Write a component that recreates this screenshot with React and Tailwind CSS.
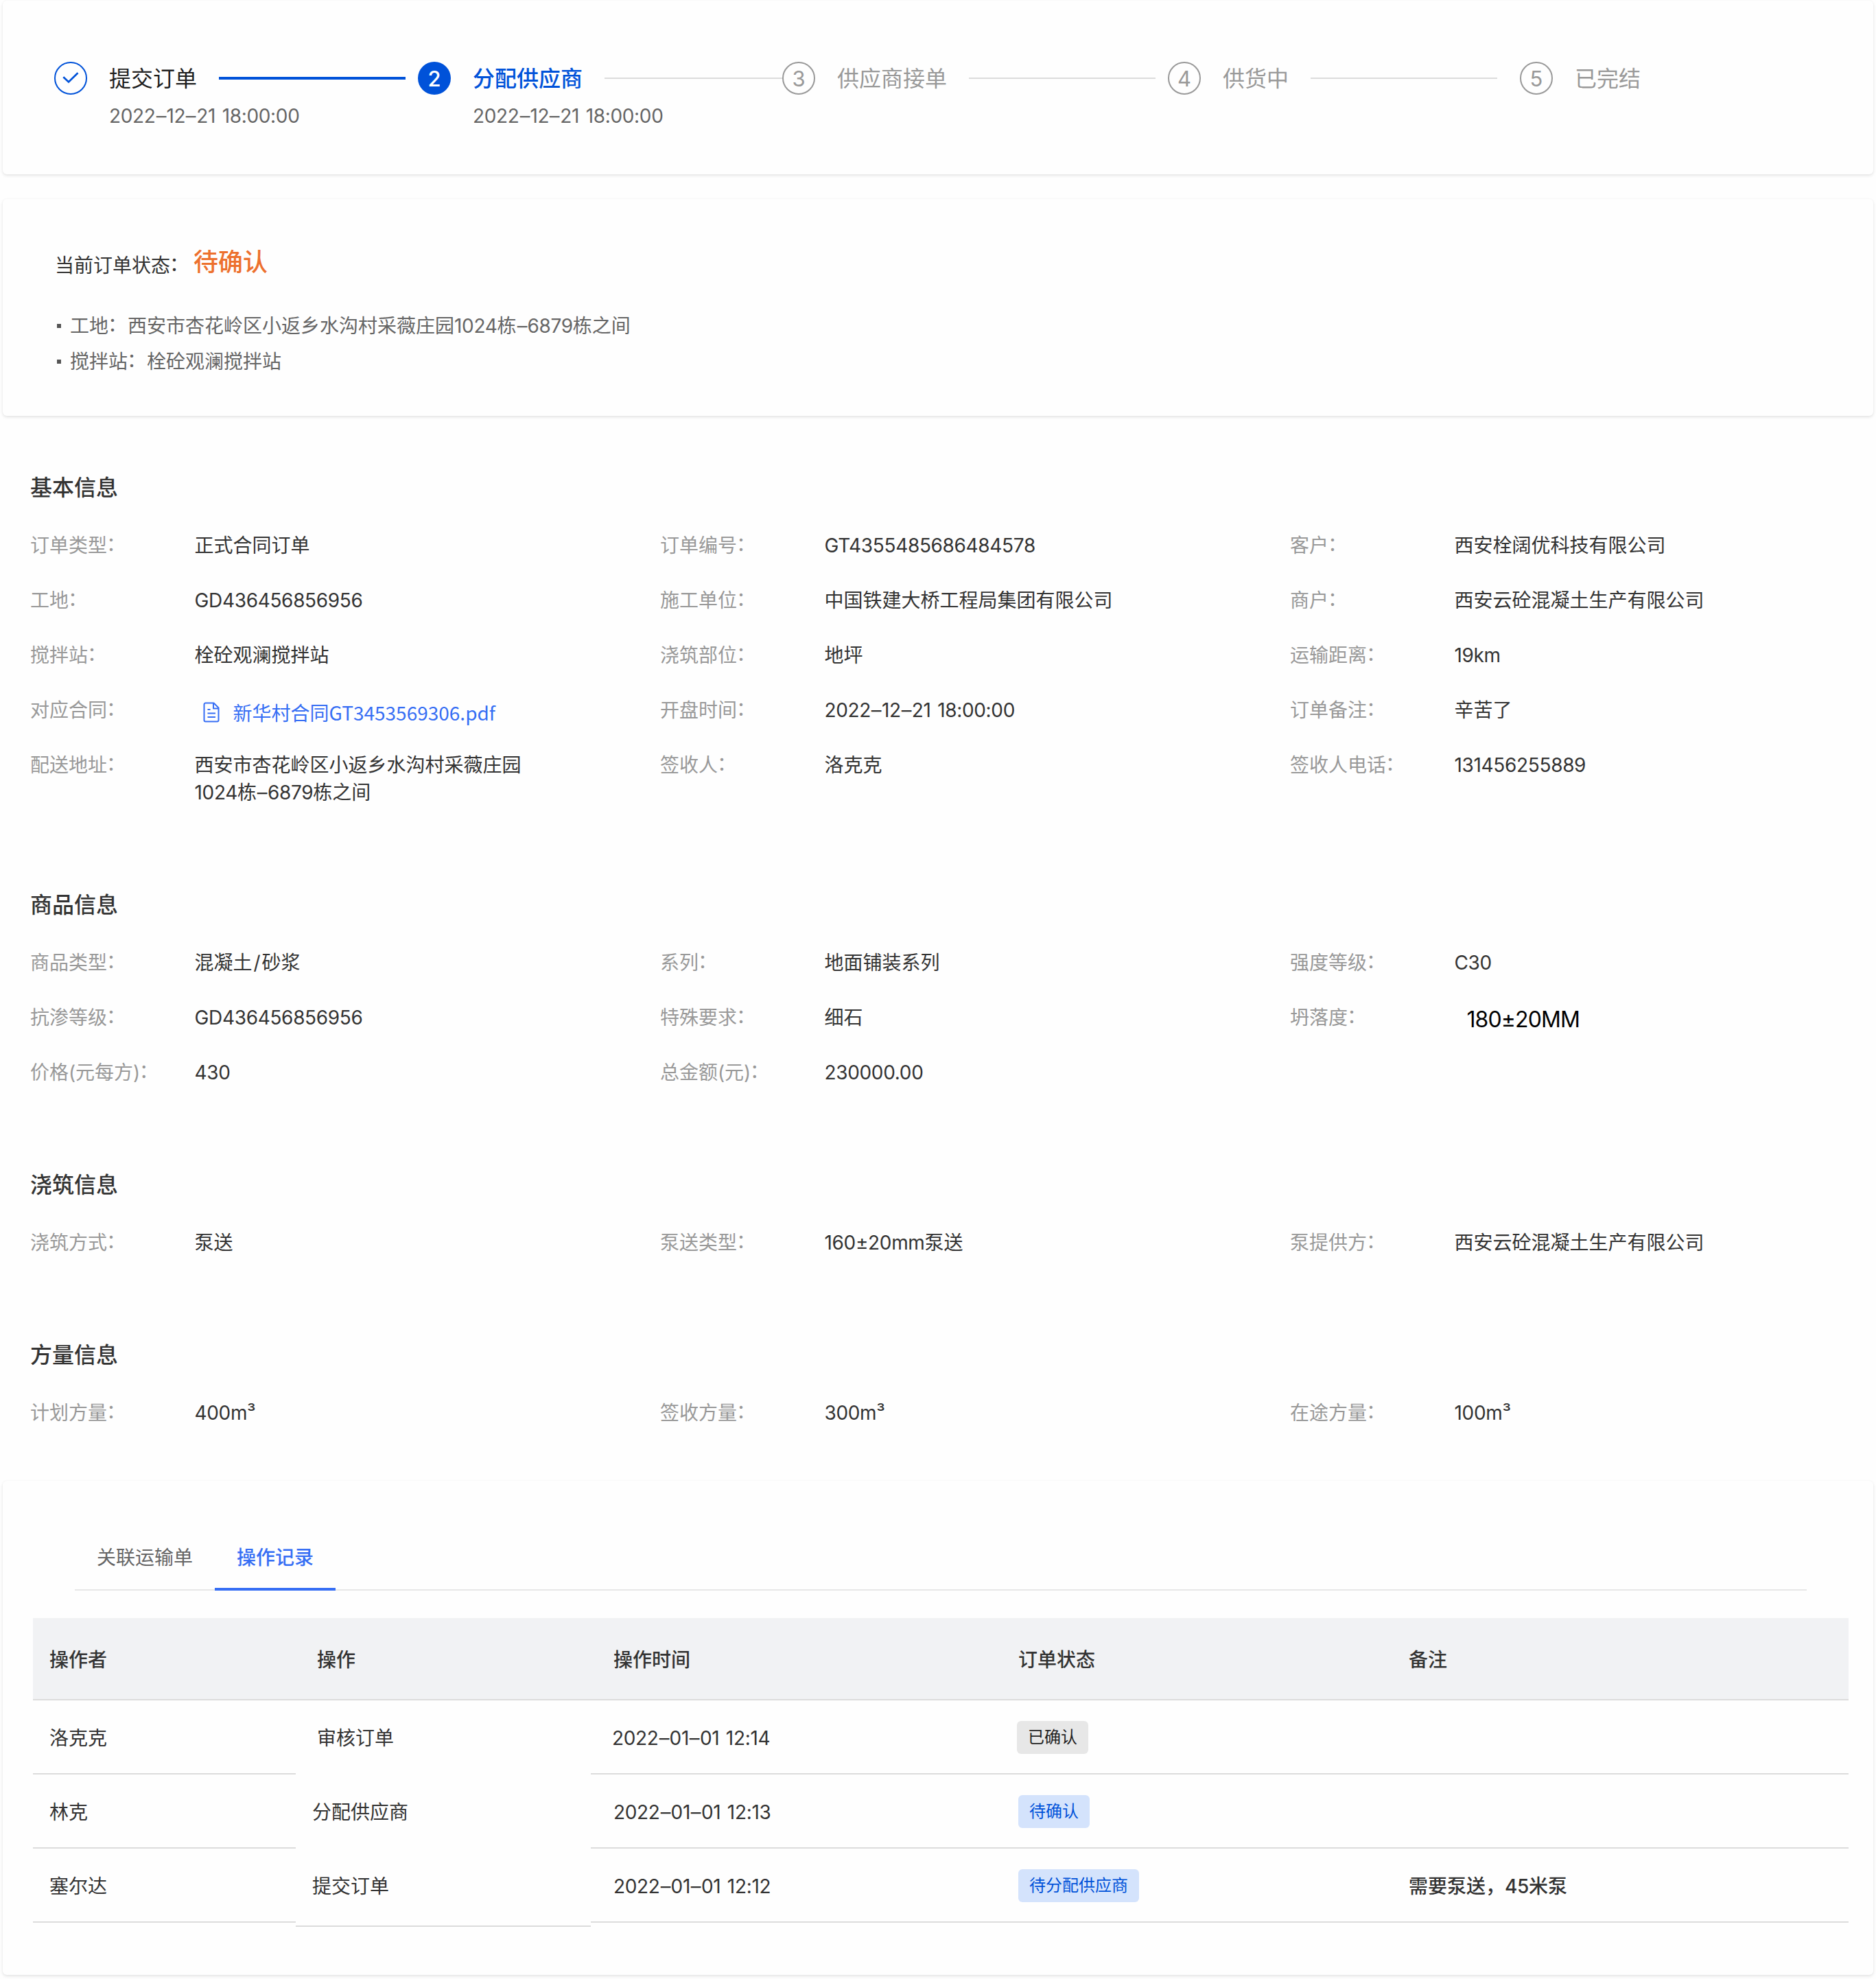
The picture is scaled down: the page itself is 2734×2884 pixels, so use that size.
const FONT = "font-['Inter','Noto_Sans_CJK_SC',sans-serif]";

function Card({ className, children }) {
  return (
    <section className={`mx-1 rounded-md bg-[#fefefe] shadow-[0_2px_4px_rgba(0,0,0,0.10),0_0_3px_rgba(0,0,0,0.03)] ${className}`}>
      {children}
    </section>
  );
}

// Sets Latin runs a little tighter than Chinese ones, widens dashes and centres full-width colons.
function T({ children }) {
  return children.split(/(：|–|\/|[0-9A-Za-z.:± ³()]+)/).map((part, i) => {
    if (part === '：') return <span key={i} className="inline-block -translate-x-px -translate-y-[2.5px]">：</span>;
    if (part === '–') return <span key={i} className="inline-block scale-x-105 px-[1px] tracking-normal">–</span>;
    if (part === '/') return <span key={i} className="px-[2px]">/</span>;
    if (i % 2) return <span key={i} className="tracking-[-0.012em] [word-spacing:2px]">{part}</span>;
    return part;
  });
}

function Check() {
  return (
    <svg width="48" height="48" viewBox="0 0 48 48" fill="none" stroke="#0052d9" className="shrink-0">
      <circle cx="24" cy="24" r="23" strokeWidth="2" />
      <path d="M13.300 22.300 L21 29.500 L34.500 16.200" strokeWidth="2.700" />
    </svg>
  );
}

function StepIcon({ n, state }) {
  if (state === 'done') return <Check />;
  const look = state === 'active' ? 'bg-[#0052d9] text-white font-medium' : 'border-2 border-[#999] text-[#999]';
  return <div className={`flex size-12 shrink-0 items-center justify-center rounded-full text-[31px] leading-none ${look}`}>{n}</div>;
}

const steps = [
  { n: 1, state: 'done', title: '提交订单', time: '2022–12–21 18:00:00', color: 'text-[#1f1f1f]', width: 'w-[160px]', line: 'w-[272px] h-[4px] bg-[#0052d9]', gap: 'mr-[18px]' },
  { n: 2, state: 'active', title: '分配供应商', time: '2022–12–21 18:00:00', color: 'font-medium text-[#0052d9]', width: 'w-[192px]', line: 'w-[259px] h-[2px] bg-[#dcdcdc]', gap: '' },
  { n: 3, state: 'todo', title: '供应商接单', color: 'text-[#999]', width: 'w-[192px]', line: 'w-[272px] h-[2px] bg-[#dcdcdc]', gap: 'mr-[18px]' },
  { n: 4, state: 'todo', title: '供货中', color: 'text-[#999]', width: 'w-[128px]', line: 'w-[272px] h-[2px] bg-[#dcdcdc]', gap: 'mr-[33px]' },
  { n: 5, state: 'todo', title: '已完结', color: 'text-[#999]', width: 'w-[128px]', gap: '' },
];

function Steps() {
  return (
    <Card className="mt-px h-[253px] pt-[89px] pl-[75px]">
      <div className="flex">
        {steps.map((s) => (
          <div key={s.n} className={`flex ${s.gap}`}>
            <StepIcon n={s.n} state={s.state} />
            <div className="ml-8">
              <div className="flex h-12 items-center">
                <span className={`shrink-0 whitespace-nowrap pt-[2px] text-[32px] leading-[46px] ${s.color} ${s.width}`}>{s.title}</span>
                {s.line && <div className={s.line} />}
              </div>
              {s.time && (
                <div className="mt-[6px] w-0 whitespace-nowrap text-[28px] leading-[50px] text-[#666]">
                  <T>{s.time}</T>
                </div>
              )}
            </div>
          </div>
        ))}
      </div>
    </Card>
  );
}

function Status() {
  return (
    <Card className="mt-9 h-[316px] pt-[66px] pl-[76px]">
      <div className="flex h-[52px] items-start">
        <span className="w-[202px] whitespace-nowrap text-[28px] leading-[63px] text-[#333]"><T>当前订单状态：</T></span>
        <span className="text-[36px] leading-[52px] font-medium text-[#ed702d]">待确认</span>
      </div>
      <ul className="mt-[41px] text-[28px] leading-[52px] text-[#666]">
        {['工地：西安市杏花岭区小返乡水沟村采薇庄园1024栋–6879栋之间', '搅拌站：栓砼观澜搅拌站'].map((t) => (
          <li key={t} className="flex items-center">
            <span className="mr-[13px] ml-[3px] size-[6px] bg-[#555]" />
            <span><T>{t}</T></span>
          </li>
        ))}
      </ul>
    </Card>
  );
}

function PdfIcon() {
  return (
    <svg width="24" height="30" viewBox="0 0 24 30" fill="none" stroke="#366ef4" strokeWidth="2" strokeLinejoin="round">
      <path d="M15.500 1.500H3.500a2 2 0 0 0-2 2v23a2 2 0 0 0 2 2h17a2 2 0 0 0 2-2V8.500Z" />
      <path d="M15 2v7.500h7.500M6.500 11h4M6.500 16.500h11.500M6.500 22h11.500" />
    </svg>
  );
}

const link = (
  <span className="flex h-[40px] items-center pt-[6px] pl-3 font-['Noto_Sans_CJK_SC',sans-serif] font-normal text-[#366ef4]">
    <PdfIcon />
    <span className="ml-5">新华村合同GT3453569306.pdf</span>
  </span>
);

const slump = <span className="block h-[40px] pt-[3px] pl-[18px] text-[32px] font-normal tracking-[-0.9px] text-black">180±20MM</span>;

const sections = [
  {
    title: '基本信息', top: 'mt-[81px]',
    rows: [
      ['订单类型：', '正式合同订单', '订单编号：', 'GT4355485686484578', '客户：', '西安栓阔优科技有限公司'],
      ['工地：', 'GD436456856956', '施工单位：', '中国铁建大桥工程局集团有限公司', '商户：', '西安云砼混凝土生产有限公司'],
      ['搅拌站：', '栓砼观澜搅拌站', '浇筑部位：', '地坪', '运输距离：', '19km'],
      ['对应合同：', link, '开盘时间：', '2022–12–21 18:00:00', '订单备注：', '辛苦了'],
      ['配送地址：', '西安市杏花岭区小返乡水沟村采薇庄园1024栋–6879栋之间', '签收人：', '洛克克', '签收人电话：', '131456255889'],
    ],
  },
  {
    title: '商品信息', top: 'mt-[120px]',
    rows: [
      ['商品类型：', '混凝土/砂浆', '系列：', '地面铺装系列', '强度等级：', 'C30'],
      ['抗渗等级：', 'GD436456856956', '特殊要求：', '细石', '坍落度：', slump],
      ['价格(元每方)：', '430', '总金额(元)：', '230000.00'],
    ],
  },
  { title: '浇筑信息', top: 'mt-[120px]', rows: [['浇筑方式：', '泵送', '泵送类型：', '160±20mm泵送', '泵提供方：', '西安云砼混凝土生产有限公司']] },
  { title: '方量信息', top: 'mt-[120px]', rows: [['计划方量：', '400m³', '签收方量：', '300m³', '在途方量：', '100m³']] },
];

function Section({ title, top, rows }) {
  return (
    <section className={`pl-[44px] ${top}`}>
      <h2 className="text-[32px] leading-[48px] font-medium text-[#333]">{title}</h2>
      <div className="mt-[40px] grid grid-cols-[repeat(3,918px)] gap-y-[40px] text-[28px] leading-[40px]">
        {rows.flatMap((r, i) =>
          [0, 2, 4].filter((c) => r[c]).map((c) => (
            <div key={`${i}-${c}`} className="flex">
              <span className="w-[239.5px] shrink-0 whitespace-nowrap text-[#999]"><T>{r[c]}</T></span>
              <span className="w-[480px] text-[#333]">{typeof r[c + 1] === 'string' ? <T>{r[c + 1]}</T> : r[c + 1]}</span>
            </div>
          )),
        )}
      </div>
    </section>
  );
}

const columns = [
  { title: '操作者', width: 'w-[383px]', head: 'pl-[24px]', cells: [['pl-[24px]', '洛克克'], ['pl-[24px]', '林克'], ['pl-[24px]', '塞尔达']] },
  { title: '操作', width: 'w-[430px]', head: 'pl-[31px]', open: true, cells: [['pl-[31px]', '审核订单'], ['pl-[24px]', '分配供应商'], ['pl-[24px]', '提交订单']] },
  { title: '操作时间', width: 'w-[592px]', head: 'pl-[33px]', cells: [['pl-[31px]', '2022–01–01 12:14'], ['pl-[33px]', '2022–01–01 12:13'], ['pl-[33px]', '2022–01–01 12:12']] },
  {
    title: '订单状态', width: 'w-[569px]', head: 'pl-[31px]', tag: true,
    cells: [
      ['pl-[29px]', '已确认', 'bg-[#e7e7e7] text-[#1f1f1f]'],
      ['pl-[31px]', '待确认', 'bg-[#d4e3fc] text-[#0052d9]'],
      ['pl-[31px]', '待分配供应商', 'bg-[#d4e3fc] text-[#0052d9]'],
    ],
  },
  { title: '备注', width: 'w-[672px]', head: 'pl-[31px]', cells: [['', ''], ['', ''], ['pl-[31px] font-medium', '需要泵送，45米泵']] },
];

function cellBox(column, i) {
  if (column.open) return i === 2 ? 'h-[114px] border-b-2 border-[#dcdcdc] pt-[4px] pb-[6px]' : 'h-[108px] pt-[4px] pb-[2px]';
  return column.tag ? 'h-[108px] border-b-2 border-[#dcdcdc] pt-[2px]' : 'h-[108px] border-b-2 border-[#dcdcdc] pt-[4px]';
}

function Log() {
  return (
    <Card className="mt-[79px] h-[720px] px-[44px] pt-[74px]">
      <div className="mr-[53px] ml-[61px] flex h-[86px] border-b-2 border-[#e7e7e7] text-[28px] leading-[77px]">
        <div className="w-[204px] pl-[32px] text-[#666]">关联运输单</div>
        <div className="h-[86px] w-[176px] border-b-4 border-[#366ef4] pl-[32px] font-medium text-[#366ef4]">操作记录</div>
      </div>
      <div className="mt-[40px] flex text-[28px] text-[#333]">
        {columns.map((c) => (
          <div key={c.title} className={`shrink-0 ${c.width}`}>
            <div className={`flex h-[120px] items-center border-b-2 border-[#dcdcdc] bg-[#f1f2f4] pt-[4px] font-medium ${c.head}`}>{c.title}</div>
            {c.cells.map(([pad, text, look], i) => (
              <div key={i} className={`flex items-center ${cellBox(c, i)} ${pad}`}>
                {c.tag ? <span className={`flex h-[48px] items-center rounded-md px-4 text-[24px] ${look}`}>{text}</span> : <span><T>{text}</T></span>}
              </div>
            ))}
          </div>
        ))}
      </div>
    </Card>
  );
}

export default function App() {
  return (
    <main className={`flow-root h-[2884px] w-[2734px] overflow-hidden bg-[#fefefe] font-[380] ${FONT}`}>
      <Steps />
      <Status />
      {sections.map((s) => (
        <Section key={s.title} {...s} />
      ))}
      <Log />
    </main>
  );
}
